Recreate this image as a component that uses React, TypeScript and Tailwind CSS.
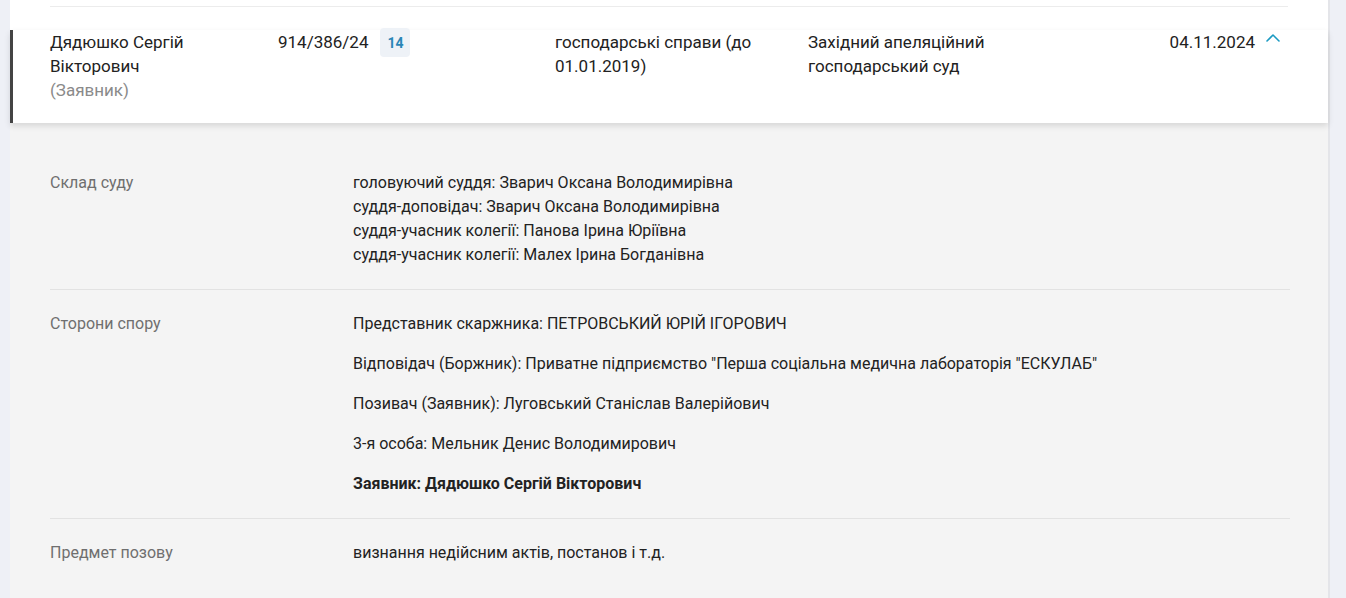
import { ChevronUp } from "lucide-react";

const judges = [
  "головуючий суддя: Зварич Оксана Володимирівна",
  "суддя-доповідач: Зварич Оксана Володимирівна",
  "суддя-учасник колегії: Панова Ірина Юріївна",
  "суддя-учасник колегії: Малех Ірина Богданівна",
];

const parties = [
  { text: "Представник скаржника: ПЕТРОВСЬКИЙ ЮРІЙ ІГОРОВИЧ" },
  { text: 'Відповідач (Боржник): Приватне підприємство "Перша соціальна медична лабораторія "ЕСКУЛАБ"' },
  { text: "Позивач (Заявник): Луговський Станіслав Валерійович" },
  { text: "3-я особа: Мельник Денис Володимирович" },
  { text: "Заявник: Дядюшко Сергій Вікторович", bold: true },
];

function DetailRow({ label, children, last }: { label: string; children: React.ReactNode; last?: boolean }) {
  return (
    <div className={"flex py-[22px] " + (last ? "" : "border-b border-[#e2e2e2]")}>
      <div className="w-[303px] shrink-0 text-[16px] leading-6 text-[#6f6f6f]">{label}</div>
      <div className="flex-1 text-[16px] leading-6 text-[#222]">{children}</div>
    </div>
  );
}

export default function App() {
  return (
    <div
      className="min-h-[598px] bg-[#eef0f6] pl-[10px] pr-[16px]"
      style={{ fontFamily: "Roboto, 'Liberation Sans', sans-serif" }}
    >
      <div className="bg-white border-r-2 border-[#e4e5e9] min-h-[598px] flex flex-col">
        <div className="pt-[6px] px-[40px]">
          <div className="border-t border-[#ececec]" />
        </div>
        <div className="pt-[23px]">
          <div className="relative z-10 flex border-l-[3px] border-[#444] bg-white pl-[37px] pr-[43px] pb-[21px] text-[17px] leading-6 text-[#222] shadow-[0_3px_6px_rgba(0,0,0,0.12)]">
            <div className="w-[228px] shrink-0">
              <div>Дядюшко Сергій</div>
              <div>Вікторович</div>
              <div className="text-[#8a8a8a]">(Заявник)</div>
            </div>
            <div className="w-[277px] shrink-0 flex items-start">
              <span>914/386/24</span>
              <span className="ml-[12px] -mt-[2px] flex h-[29px] w-[30px] items-center justify-center rounded bg-[#eef2f7] text-[14px] font-bold text-[#2a86b6]">
                14
              </span>
            </div>
            <div className="w-[253px] shrink-0">
              <div>господарські справи (до</div>
              <div>01.01.2019)</div>
            </div>
            <div className="flex-1">
              <div>Західний апеляційний</div>
              <div>господарський суд</div>
            </div>
            <div className="flex items-start gap-[6px]">
              <span>04.11.2024</span>
              <ChevronUp className="-mt-[4px] h-6 w-6 text-[#1b9ac2]" strokeWidth={1.6} />
            </div>
          </div>
        </div>
        <div className="flex-1 bg-[#f4f4f4] px-[37px] pt-[26px]">
          <div className="ml-[3px] mr-[1px]">
            <DetailRow label="Склад суду">
              {judges.map((j) => (
                <div key={j}>{j}</div>
              ))}
            </DetailRow>
            <DetailRow label="Сторони спору">
              <div className="flex flex-col gap-4">
                {parties.map((p) => (
                  <div key={p.text} className={p.bold ? "font-bold" : ""}>
                    {p.text}
                  </div>
                ))}
              </div>
            </DetailRow>
            <DetailRow label="Предмет позову" last>
              визнання недійсним актів, постанов і т.д.
            </DetailRow>
          </div>
        </div>
      </div>
    </div>
  );
}
